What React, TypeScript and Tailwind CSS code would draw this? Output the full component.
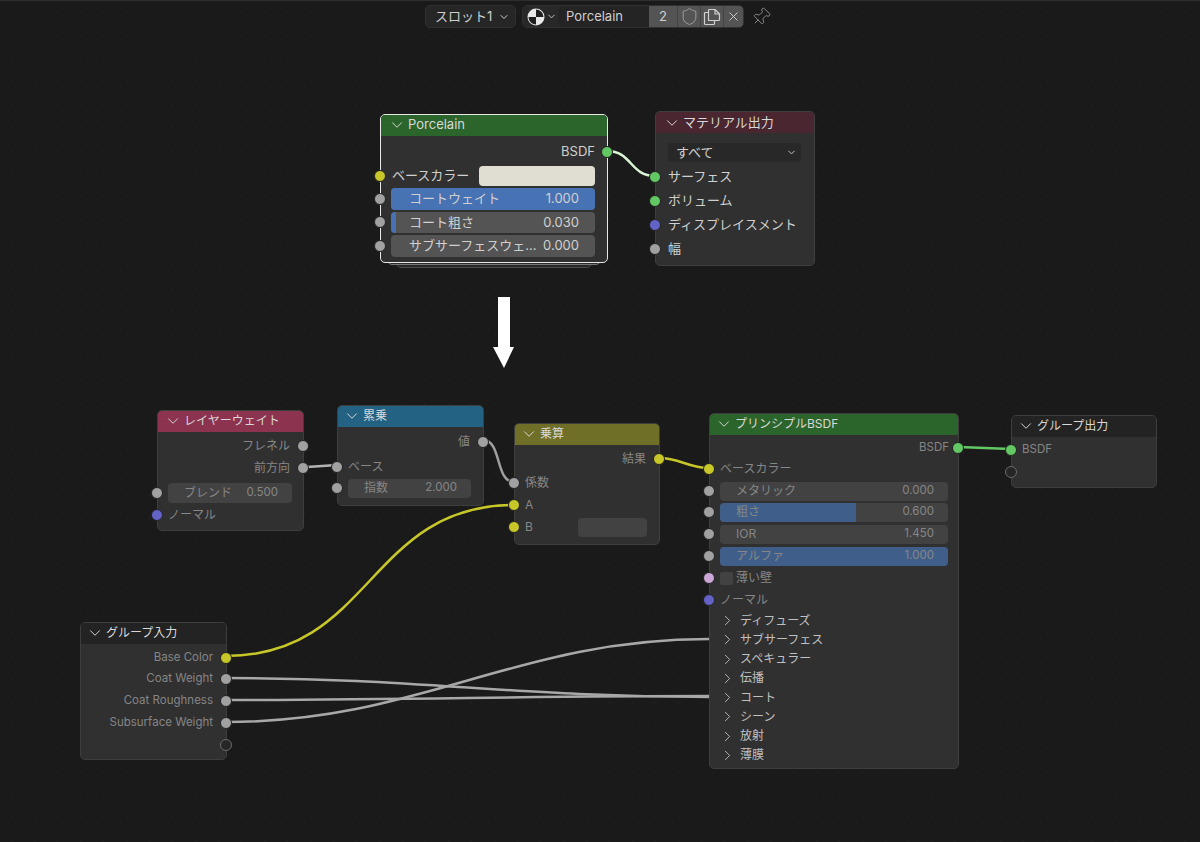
import { ChevronDown, ChevronRight, Pin, Shield, X } from "lucide-react";
import type { ReactNode } from "react";

type RowProps = {
  socket?: string;
  side?: "left" | "right";
  hollow?: boolean;
  className?: string;
  children?: ReactNode;
};

// socket dot sits half outside the node edge
function Row({ socket, side = "left", hollow, className = "", children }: RowProps) {
  return (
    <div className={`relative flex items-center ${className}`}>
      {(socket || hollow) && (
        <span
          className={`absolute top-1/2 size-[12px] -translate-y-1/2 rounded-full ${
            side === "left" ? "-left-[7px]" : "-right-[6px]"
          } ${hollow ? "border border-[#6b6b6b] bg-[#262626]" : "border border-[#222] " + socket}`}
        />
      )}
      {children}
    </div>
  );
}

function Field({ label, value, fill, bright }: { label: string; value?: string; fill?: ReactNode; bright?: boolean }) {
  return (
    <div
      className={`relative flex h-full w-full items-center justify-between overflow-hidden rounded-[4px] ${
        bright ? "bg-[#545454] pl-[18px] pr-[16px] text-[#d0d0d0]" : "bg-[#424242] pl-[16px] pr-[14px] text-[#868686]"
      }`}
    >
      {fill}
      <span className="relative whitespace-nowrap">{label}</span>
      <span className={`relative shrink-0 ${bright ? "" : "text-[11.5px]"}`}>{value}</span>
    </div>
  );
}

function Node({
  box,
  head,
  title,
  selected,
  children,
}: {
  box: string;
  head: string;
  title: string;
  selected?: boolean;
  children: ReactNode;
}) {
  return (
    <div
      className={`absolute flex flex-col rounded-[5px] border bg-[#303030] ${box} ${
        selected ? "border-[#e8e8e8]" : "border-[#3e3e3e]"
      }`}
    >
      <div className={`flex h-[21px] shrink-0 items-center gap-[2px] rounded-t-[4px] text-[#d8d8d8] ${head}`}>
        <ChevronDown size={18} strokeWidth={1.3} className="shrink-0" />
        <span className="whitespace-nowrap">{title}</span>
      </div>
      {children}
    </div>
  );
}

const GREEN = "bg-[#63c763]";
const YELLOW = "bg-[#c7c729]";
const GRAY = "bg-[#a1a1a1]";
const BLUE = "bg-[#6363c7]";
const PINK = "bg-[#cca6d6]";

const panels = ["ディフューズ", "サブサーフェス", "スペキュラー", "伝播", "コート", "シーン", "放射", "薄膜"];

export default function App() {
  return (
    <div className="relative h-[842px] w-[1200px] overflow-hidden border-t border-[#2e2e2e] bg-[#1a1a1a] bg-[radial-gradient(circle,#222222_0.8px,transparent_1.1px)] bg-[size:23px_23px] font-['Inter','Noto_Sans_CJK_JP',sans-serif] text-[12px] text-[#868686]">
      {/* top bar */}
      <div className="flex items-center justify-center gap-[6px] pr-[4px] pt-[4px] text-[13px] text-[#cfcfcf]">
        <div className="flex h-[23px] w-[91px] items-center justify-between rounded-[5px] border border-[#303030] bg-[#262626] pl-[9px] pr-[5px]">
          <span>スロット1</span>
          <ChevronDown size={12} strokeWidth={2} />
        </div>
        <div className="flex h-[23px] w-[222px] items-stretch overflow-hidden rounded-[5px] border border-[#303030]">
          <div className="flex w-[36px] items-center gap-[1px] bg-[#282828] pl-[4px]">
            <svg width="18" height="18" viewBox="0 0 18 18" className="shrink-0">
              <circle cx="9" cy="9" r="8.5" fill="#e8e8e8" />
              <path d="M9 9V1.5A7.5 7.5 0 0 1 16.5 9Z" fill="#1f1f1f" />
              <path d="M9 9H1.5A7.5 7.5 0 0 0 9 16.5Z" fill="#1f1f1f" />
            </svg>
            <ChevronDown size={11} strokeWidth={2} />
          </div>
          <div className="flex w-[90px] items-center bg-[#242424] pl-[7px]">Porcelain</div>
          <div className="flex w-[28px] items-center justify-center bg-[#545454]">2</div>
          <div className="flex w-[23px] items-center justify-center border-l border-[#444] bg-[#545454] text-[#a8a8a8]">
            <Shield size={19} strokeWidth={1.1} />
          </div>
          <div className="flex w-[23px] items-center justify-center border-l border-[#444] bg-[#545454]">
            <svg width="18" height="18" viewBox="0 0 18 18" fill="none" stroke="#d0d0d0" strokeWidth="1.2" strokeLinejoin="round">
              <path d="M5.5 4.5H2.5A1 1 0 0 0 1.5 5.5V15.5A1 1 0 0 0 2.5 16.5H10.5A1 1 0 0 0 11.5 15.5V12.5" />
              <path d="M5.5 12.5V2.5A1 1 0 0 1 6.5 1.5H12L16.5 6V11.5A1 1 0 0 1 15.5 12.5Z" />
              <path d="M12 1.5V6H16.5" />
            </svg>
          </div>
          <div className="flex flex-1 items-center justify-center border-l border-[#444] bg-[#545454]">
            <X size={15} strokeWidth={1.5} />
          </div>
        </div>
        <Pin size={20} strokeWidth={1.1} className="ml-[1px] rotate-45 text-[#8e8e8e]" />
      </div>

      {/* wires */}
      <svg className="absolute -top-px left-0" width="1200" height="842" fill="none" strokeLinecap="round">
        <path d="M607 151C632 151 630 176 655 176" stroke="#d9f5d4" strokeWidth="2.5" />
        <path d="M307 467L337 465" stroke="#b4b4b4" strokeWidth="2.5" />
        <path d="M483 440C502 440 495 482 514 482" stroke="#a0a0a0" strokeWidth="2.5" />
        <path d="M659 458C680 458 688 468 709 468" stroke="#c7c729" strokeWidth="2.5" />
        <path d="M226 656C372 656 368 505 514 505" stroke="#c7c729" strokeWidth="2.5" />
        <path d="M959 447L1011 449" stroke="#63c763" strokeWidth="2.5" />
        <path d="M226 678C420 678 515 697 709 697" stroke="#a8a8a8" strokeWidth="2.5" />
        <path d="M226 700C420 700 515 696 709 696" stroke="#a8a8a8" strokeWidth="2.5" />
        <path d="M226 722C420 722 515 639 709 639" stroke="#a8a8a8" strokeWidth="2.5" />
        <path d="M498 297H510V347H514L504 368L493 347H498Z" fill="#fff" />
      </svg>

      {/* selected node, with the stacked nodes peeking out under it */}
      <div className="absolute left-[396px] top-[258px] h-[9px] w-[196px] rounded-b-[5px] border border-[#4a4a4a] bg-[#262626]" />
      <div className="absolute left-[387px] top-[255px] h-[9px] w-[214px] rounded-b-[5px] border border-[#777777] bg-[#2a2a2a]" />
      <Node box="left-[380px] top-[113px] h-[149px] w-[228px] text-[13px] text-[#d0d0d0]" head="bg-[#2b652b] pb-[2px] pl-[7px]" title="Porcelain" selected>
        <div className="flex flex-col pr-[12px] pt-[4px]">
          <Row socket={GREEN} side="right" className="-mr-[12px] h-[24px] justify-end pr-[12px]">BSDF</Row>
          <Row socket={YELLOW} className="h-[23px] justify-between pl-[11px]">
            <span>ベースカラー</span>
            <span className="h-[20px] w-[116px] rounded-[4px] bg-[#e0ddd3]" />
          </Row>
          <Row socket={GRAY} className="h-[23.5px] py-[1px] pl-[10px]">
            <Field bright label="コートウェイト" value="1.000" fill={<span className="absolute inset-0 bg-[#4772b3]" />} />
          </Row>
          <Row socket={GRAY} className="h-[23.5px] py-[1px] pl-[10px]">
            <Field bright label="コート粗さ" value="0.030" fill={<span className="absolute inset-y-0 left-0 w-[5px] bg-[#4772b3]" />} />
          </Row>
          <Row socket={GRAY} className="h-[23.5px] py-[1px] pl-[10px]">
            <Field bright label="サブサーフェスウェ..." value="0.000" />
          </Row>
        </div>
      </Node>

      <Node box="left-[655px] top-[110px] h-[155px] w-[160px] text-[13px] text-[#d0d0d0]" head="bg-[#4a2630] pl-[7px]" title="マテリアル出力">
        <div className="flex flex-col pt-[9px]">
          <div className="ml-[11px] mr-[12px] mb-[2px] flex h-[21px] items-center justify-between rounded-[4px] border border-[#303030] bg-[#282828] pl-[8px] pr-[4px]">
            <span>すべて</span>
            <ChevronDown size={11} strokeWidth={2} />
          </div>
          <Row socket={GREEN} className="h-[24px] pl-[12px]">サーフェス</Row>
          <Row socket={GREEN} className="h-[24px] pl-[12px]">ボリューム</Row>
          <Row socket={BLUE} className="h-[24px] pl-[12px]">ディスプレイスメント</Row>
          <Row socket={GRAY} className="h-[23px] pl-[12px]">幅</Row>
        </div>
      </Node>

      <Node box="left-[157px] top-[409px] h-[121px] w-[147px]" head="bg-[#8c3350] pb-[2px] pl-[6px] text-[12px]" title="レイヤーウェイト">
        <div className="flex flex-col pt-[3px]">
          <Row socket={GRAY} side="right" className="h-[22px] justify-end pr-[13px]">フレネル</Row>
          <Row socket={GRAY} side="right" className="h-[22px] justify-end pr-[13px]">前方向</Row>
          <Row socket={GRAY} className="mt-[2px] h-[24px] pl-[10px] pr-[11px] py-[2px]">
            <Field label="ブレンド" value="0.500" />
          </Row>
          <Row socket={BLUE} className="h-[20px] pl-[10px]">ノーマル</Row>
        </div>
      </Node>

      <Node box="left-[337px] top-[404px] h-[101px] w-[147px]" head="bg-[#246283] pb-[2px] pl-[5px] text-[12px]" title="累乗">
        <div className="flex flex-col pt-[4px]">
          <Row socket={GRAY} side="right" className="h-[22px] justify-end pr-[13px]">値</Row>
          <Row socket={GRAY} className="mt-[3px] h-[22px] pl-[10px]">ベース</Row>
          <Row socket={GRAY} className="-mt-px h-[22px] pl-[10px] pr-[12px] py-[1.5px]">
            <Field label="指数" value="2.000" />
          </Row>
        </div>
      </Node>

      <Node box="left-[514px] top-[422px] h-[122px] w-[146px]" head="bg-[#6f6f28] pb-[2px] pl-[5px] text-[12px]" title="乗算">
        <div className="flex flex-col pt-[3px]">
          <Row socket={YELLOW} side="right" className="h-[22px] justify-end pr-[13px]">結果</Row>
          <Row socket={GRAY} className="mt-[2px] h-[22px] pl-[10px]">係数</Row>
          <Row socket={YELLOW} className="h-[22px] pl-[10px]">A</Row>
          <Row socket={YELLOW} className="h-[22px] justify-between pl-[10px] pr-[12px]">
            <span>B</span>
            <span className="h-[19px] w-[69px] rounded-[4px] bg-[#424242]" />
          </Row>
        </div>
      </Node>

      <Node box="left-[709px] top-[412px] h-[356px] w-[250px]" head="bg-[#2b652b] pb-[2px] pl-[5px] text-[12px]" title="プリンシプルBSDF">
        <div className="flex flex-col pt-[2px]">
          <Row socket={GREEN} side="right" className="h-[22px] justify-end pr-[9px] text-[11.5px]">BSDF</Row>
          <Row socket={YELLOW} className="-mt-px h-[22px] pl-[10px]">ベースカラー</Row>
          <Row socket={GRAY} className="h-[22px] px-[10px] py-[1.5px]">
            <Field label="メタリック" value="0.000" />
          </Row>
          <Row socket={GRAY} className="-mt-px h-[22px] px-[10px] py-[1.5px]">
            <Field label="粗さ" value="0.600" fill={<span className="absolute inset-y-0 left-0 w-[136px] bg-[#3f5f8a]" />} />
          </Row>
          <Row socket={GRAY} className="h-[22px] px-[10px] py-[1.5px]">
            <Field label="IOR" value="1.450" />
          </Row>
          <Row socket={GRAY} className="h-[22px] px-[10px] py-[1.5px]">
            <Field label="アルファ" value="1.000" fill={<span className="absolute inset-0 bg-[#3f5f8a]" />} />
          </Row>
          <Row socket={PINK} className="h-[22px] gap-[3px] pl-[10px]">
            <span className="size-[13px] rounded-[2px] bg-[#424242]" />
            <span>薄い壁</span>
          </Row>
          <Row socket={BLUE} className="mt-px h-[20px] pl-[10px]">ノーマル</Row>
          <div className="flex flex-col pt-[1px] text-[#c0c0c0]">
            {panels.map((name) => (
              <div key={name} className="flex h-[19.25px] items-center gap-[4px] pl-[9px]">
                <ChevronRight size={17} strokeWidth={1.3} />
                <span>{name}</span>
              </div>
            ))}
          </div>
        </div>
      </Node>

      <Node box="left-[1011px] top-[414px] h-[73px] w-[146px]" head="bg-[#232323] pb-[2px] pl-[5px] text-[12px]" title="グループ出力">
        <div className="flex flex-col pt-[2px]">
          <Row socket={GREEN} className="h-[22px] pl-[10px] text-[11.5px]">BSDF</Row>
          <Row hollow className="h-[22px]" />
        </div>
      </Node>

      <Node box="left-[80px] top-[621px] h-[138px] w-[147px]" head="bg-[#232323] pb-[2px] pl-[5px] text-[12px]" title="グループ入力">
        <div className="flex flex-col pt-[3px] text-[11.5px]">
          <Row socket={YELLOW} side="right" className="h-[21px] justify-end pr-[13px]">Base Color</Row>
          <Row socket={GRAY} side="right" className="h-[22px] justify-end pr-[13px]">Coat Weight</Row>
          <Row socket={GRAY} side="right" className="h-[22px] justify-end pr-[13px]">Coat Roughness</Row>
          <Row socket={GRAY} side="right" className="h-[22px] justify-end pr-[13px]">Subsurface Weight</Row>
          <Row hollow side="right" className="h-[21px]" />
        </div>
      </Node>
    </div>
  );
}
